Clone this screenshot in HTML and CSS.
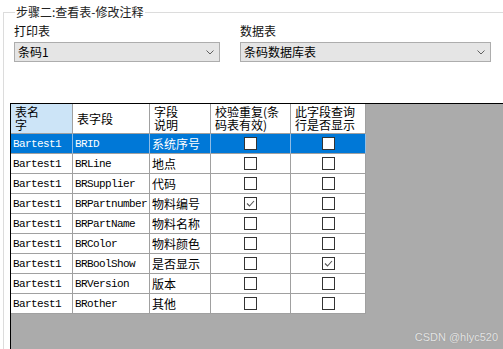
FILE: index.html
```html
<!DOCTYPE html>
<html>
<head>
  <meta charset="UTF-8">
  <title>步骤二</title>
  <link rel="stylesheet" href="styles.css">
</head>
<body>
  <fieldset class="step-box">
    <legend>步骤二:查看表-修改注释</legend>

    <div class="pickers">
      <div class="picker picker-print">
        <div class="picker-label">打印表</div>
        <div class="combo">
          <span>条码1</span>
          <svg class="combo-arrow" width="8" height="5" viewBox="0 0 8 5"><polyline points="0.5,0.5 4,4 7.5,0.5" fill="none" stroke="#606060" stroke-width="1"/></svg>
        </div>
      </div>
      <div class="picker picker-data">
        <div class="picker-label">数据表</div>
        <div class="combo">
          <span>条码数据库表</span>
          <svg class="combo-arrow" width="8" height="5" viewBox="0 0 8 5"><polyline points="0.5,0.5 4,4 7.5,0.5" fill="none" stroke="#606060" stroke-width="1"/></svg>
        </div>
      </div>
    </div>

    <div class="grid-view">
      <div class="grid-table">
        <div class="cell head head-current">表名<br>字</div>
        <div class="cell head">表字段</div>
        <div class="cell head">字段<br>说明</div>
        <div class="cell head">校验重复(条<br>码表有效)</div>
        <div class="cell head">此字段查询<br>行是否显示</div>

        <div class="cell mono selected">Bartest1</div>
        <div class="cell mono selected">BRID</div>
        <div class="cell selected">系统序号</div>
        <div class="cell check selected"><span class="box"></span></div>
        <div class="cell check selected"><span class="box"></span></div>

        <div class="cell mono">Bartest1</div>
        <div class="cell mono">BRLine</div>
        <div class="cell">地点</div>
        <div class="cell check"><span class="box"></span></div>
        <div class="cell check"><span class="box"></span></div>

        <div class="cell mono">Bartest1</div>
        <div class="cell mono">BRSupplier</div>
        <div class="cell">代码</div>
        <div class="cell check"><span class="box"></span></div>
        <div class="cell check"><span class="box"></span></div>

        <div class="cell mono">Bartest1</div>
        <div class="cell mono">BRPartnumber</div>
        <div class="cell">物料编号</div>
        <div class="cell check"><span class="box"><svg width="11" height="11" viewBox="0 0 11 11"><polyline points="2,5.5 4.5,8 9,3" fill="none" stroke="#555" stroke-width="1.1"/></svg></span></div>
        <div class="cell check"><span class="box"></span></div>

        <div class="cell mono">Bartest1</div>
        <div class="cell mono">BRPartName</div>
        <div class="cell">物料名称</div>
        <div class="cell check"><span class="box"></span></div>
        <div class="cell check"><span class="box"></span></div>

        <div class="cell mono">Bartest1</div>
        <div class="cell mono">BRColor</div>
        <div class="cell">物料颜色</div>
        <div class="cell check"><span class="box"></span></div>
        <div class="cell check"><span class="box"></span></div>

        <div class="cell mono">Bartest1</div>
        <div class="cell mono">BRBoolShow</div>
        <div class="cell">是否显示</div>
        <div class="cell check"><span class="box"></span></div>
        <div class="cell check"><span class="box"><svg width="11" height="11" viewBox="0 0 11 11"><polyline points="2,5.5 4.5,8 9,3" fill="none" stroke="#555" stroke-width="1.1"/></svg></span></div>

        <div class="cell mono">Bartest1</div>
        <div class="cell mono">BRVersion</div>
        <div class="cell">版本</div>
        <div class="cell check"><span class="box"></span></div>
        <div class="cell check"><span class="box"></span></div>

        <div class="cell mono">Bartest1</div>
        <div class="cell mono">BRother</div>
        <div class="cell">其他</div>
        <div class="cell check"><span class="box"></span></div>
        <div class="cell check"><span class="box"></span></div>
      </div>
    </div>
  </fieldset>

  <div class="watermark">CSDN @hlyc520</div>
</body>
</html>
```

FILE: styles.css
```css
body {
  margin: 0;
  width: 503px;
  height: 349px;
  overflow: hidden;
  position: relative;
  background-color: #ffffff;
  font-family: "Noto Sans CJK SC", sans-serif;
  font-size: 12px;
  color: #000;
}
/* the group box runs on past the right and bottom edges */
.step-box {
  box-sizing: border-box;
  margin: 4px 0 0 3px;
  padding: 3px 0 0 6px;
  border: 1px solid #dcdcdc;
  border-right: none;
  border-bottom: none;
  width: 500px;
  height: 345px;
  min-width: 0;
}
.step-box legend {
  margin-left: 5px;
  padding: 0 1px;
  line-height: 16px;
  color: #222;
}
.pickers {
  display: flex;
  gap: 20px;
  padding-left: 4px;
}
.picker-print {
  width: 206px;
}
.picker-data {
  width: 251px;
}
.picker-label {
  line-height: 16px;
  margin-bottom: 3px;
  color: #111;
}
.combo {
  box-sizing: border-box;
  height: 20px;
  display: flex;
  align-items: center;
  justify-content: space-between;
  padding: 0 5px 0 3px;
  border: 1px solid #adadad;
  background-color: #e5e5e5;
  line-height: 16px;
}
.combo-arrow {
  display: block;
}
.grid-view {
  box-sizing: border-box;
  margin-top: 41px;
  width: 493px;
  height: 246px;
  border: 1px solid #000;
  border-right: none;
  border-bottom: none;
  background-color: #ababab;
}
.grid-table {
  display: grid;
  grid-template-columns: 62px 77px 61px 80px 75px;
  grid-template-rows: 30px;
  grid-auto-rows: 20px;
  width: max-content;
}
.cell {
  box-sizing: border-box;
  display: flex;
  align-items: center;
  padding-left: 2px;
  border-right: 1px solid #a0a0a0;
  border-bottom: 1px solid #a0a0a0;
  background-color: #ffffff;
  white-space: nowrap;
  overflow: hidden;
}
.head {
  padding: 0 0 1px 4px;
  line-height: 13px;
}
.head-current {
  background-color: #cce4f7;
}
.mono {
  font-family: "Liberation Mono", monospace;
  font-size: 11px;
  letter-spacing: -0.6px;
}
.selected {
  background-color: #0078d7;
  color: #ffffff;
  border-right-color: #8fbce6;
}
.check {
  justify-content: center;
  padding: 0;
}
.box {
  box-sizing: border-box;
  width: 13px;
  height: 13px;
  border: 1px solid #333;
  background-color: #ffffff;
}
.box svg {
  display: block;
}
.watermark {
  position: absolute;
  right: 5px;
  bottom: 6px;
  font-family: "Liberation Sans", sans-serif;
  font-size: 11px;
  color: #e4e4e4;
  text-shadow: 0 0 1px #8a8a8a;
}
```
